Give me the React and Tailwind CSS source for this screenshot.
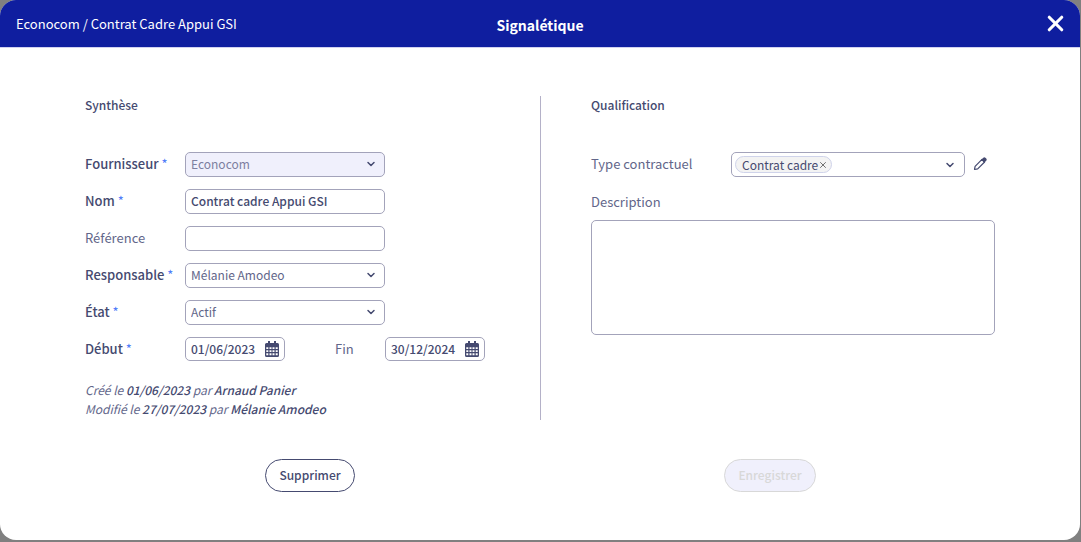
import React, { useState } from "react";
import { ChevronDown, X } from "lucide-react";

const fieldBorder = "border border-[#a3a3ba] rounded-[5px]";

function Label({ htmlFor, required, children }) {
  return (
    <label
      htmlFor={htmlFor}
      className={`w-[100px] shrink-0 pb-px text-[13px] leading-5 ${required ? "font-medium" : "text-[#62668a]"}`}
    >
      {children}
      {required && <span className="text-[#4f7df9] font-normal"> *</span>}
    </label>
  );
}

function SelectField({ id, value, disabled }) {
  return (
    <div className="relative w-[200px]">
      <select
        id={id}
        disabled={disabled}
        defaultValue={value}
        className={`block w-full h-[25px] pl-[5px] pr-7 pb-0.5 appearance-none text-xs opacity-100 ${fieldBorder} ${
          disabled ? "bg-[#f0f0fc] text-[#7d7fa0]" : "bg-white text-[#62668a]"
        }`}
      >
        <option>{value}</option>
      </select>
      <ChevronDown size={12} strokeWidth={3} className="absolute right-2 top-[6px] pointer-events-none" />
    </div>
  );
}

function TextField({ id, value, onChange }) {
  return (
    <input
      id={id}
      type="text"
      value={value}
      onChange={(e) => onChange(e.target.value)}
      className={`w-[200px] h-[25px] px-[5px] pb-0.5 text-xs font-medium ${fieldBorder}`}
    />
  );
}

function CalendarIcon() {
  return (
    <svg width="14" height="16" viewBox="0 0 14 16" fill="currentColor" aria-hidden="true">
      <path
        fillRule="evenodd"
        d="M3 0h2v2h4V0h2v2h1.500a1.500 1.500 0 0 1 1.500 1.500v11a1.500 1.500 0 0 1-1.500 1.500h-11A1.500 1.500 0 0 1 0 14.500v-11A1.500 1.500 0 0 1 1.500 2H3zM1.300 6.200v1.800h2V6.200zM4.500 6.200v1.800h2V6.200zM7.500 6.200v1.800h2V6.200zM10.700 6.200v1.800h2V6.200zM1.300 9.200v1.800h2V9.200zM4.500 9.200v1.800h2V9.200zM7.500 9.200v1.800h2V9.200zM10.700 9.200v1.800h2V9.200zM1.300 12.200v2h2v-2zM4.500 12.200v2h2v-2zM7.500 12.200v2h2v-2zM10.700 12.200v2h2v-2z"
      />
    </svg>
  );
}

function PencilIcon() {
  return (
    <svg width="14" height="14" viewBox="0 0 14 14" aria-hidden="true">
      <path d="M1.500 12.500l.6-3.200L9 2.400l2.600 2.600-6.900 6.900z" fill="none" stroke="currentColor" strokeWidth="1.200" strokeLinejoin="round" />
      <path d="M8.200 2.800L10.300.8a1.500 1.500 0 0 1 2.100 0l.8.8a1.500 1.500 0 0 1 0 2.100l-2 2.100z" fill="currentColor" />
    </svg>
  );
}

function DateField({ id, value, onChange, label }) {
  return (
    <div className={`flex items-center w-[100px] h-6 px-[5px] bg-white ${fieldBorder}`}>
      <input
        id={id}
        type="text"
        value={value}
        onChange={(e) => onChange(e.target.value)}
        className="flex-1 min-w-0 text-xs font-medium outline-none"
      />
      <button type="button" aria-label={label}>
        <CalendarIcon />
      </button>
    </div>
  );
}

export default function App() {
  const [form, setForm] = useState({
    nom: "Contrat cadre Appui GSI",
    reference: "",
    debut: "01/06/2023",
    fin: "30/12/2024",
    description: "",
  });
  const [types, setTypes] = useState(["Contrat cadre"]);

  const update = (field) => (value) => setForm({ ...form, [field]: value });

  return (
    <div className="min-h-screen flex flex-col pr-px pb-0.5 bg-[#808080] text-[#454a70] font-['Noto_Sans_CJK_JP','Open_Sans',sans-serif]">
      <div role="dialog" aria-labelledby="title" className="flex-1 bg-white rounded-2xl overflow-hidden">
        <header className="grid grid-cols-3 items-center h-12 px-4 bg-[#0f1e9f] text-white border-b border-[#d0d1f0]">
          <span className="text-[13px]">Econocom / Contrat Cadre Appui GSI</span>
          <h1 id="title" className="pt-0.5 text-center text-sm font-bold">Signalétique</h1>
          <button type="button" aria-label="Fermer" className="justify-self-end -mr-1">
            <X size={25} strokeWidth={3} />
          </button>
        </header>

        <form onSubmit={(e) => e.preventDefault()}>
          <div className="grid grid-cols-2 px-[85px] pt-12">
            <section className="pb-0.5">
              <h2 className="text-xs leading-[18px] font-medium mb-[38px]">Synthèse</h2>
              <div className="flex flex-col gap-3">
                <div className="flex items-center">
                  <Label htmlFor="fournisseur" required>Fournisseur</Label>
                  <SelectField id="fournisseur" value="Econocom" disabled />
                </div>
                <div className="flex items-center">
                  <Label htmlFor="nom" required>Nom</Label>
                  <TextField id="nom" value={form.nom} onChange={update("nom")} />
                </div>
                <div className="flex items-center">
                  <Label htmlFor="reference">Référence</Label>
                  <TextField id="reference" value={form.reference} onChange={update("reference")} />
                </div>
                <div className="flex items-center">
                  <Label htmlFor="responsable" required>Responsable</Label>
                  <SelectField id="responsable" value="Mélanie Amodeo" />
                </div>
                <div className="flex items-center">
                  <Label htmlFor="etat" required>État</Label>
                  <SelectField id="etat" value="Actif" />
                </div>
                <div className="flex items-center">
                  <Label htmlFor="debut" required>Début</Label>
                  <DateField id="debut" value={form.debut} onChange={update("debut")} label="Choisir la date de début" />
                  <label htmlFor="fin" className="w-[100px] pl-[50px] pb-px text-[13px] leading-5 text-[#62668a]">Fin</label>
                  <DateField id="fin" value={form.fin} onChange={update("fin")} label="Choisir la date de fin" />
                </div>
              </div>
              <div className="mt-[19px] text-xs leading-[19px] italic text-[#62668a]">
                <p>
                  Créé le <b className="font-medium text-[#454a70]">01/06/2023</b> par{" "}
                  <b className="font-medium text-[#454a70]">Arnaud Panier</b>
                </p>
                <p>
                  Modifié le <b className="font-medium text-[#454a70]">27/07/2023</b> par{" "}
                  <b className="font-medium text-[#454a70]">Mélanie Amodeo</b>
                </p>
              </div>
            </section>

            <section className="border-l border-[#b4b1c8] pl-[50px]">
              <h2 className="text-xs leading-[18px] font-medium mb-[38px]">Qualification</h2>
              <div className="flex items-center">
                <span id="type" className="w-[140px] shrink-0 pb-px text-[13px] leading-5 text-[#62668a]">Type contractuel</span>
                <div role="group" aria-labelledby="type" className={`flex flex-1 items-center h-[25px] pl-[3px] pr-2 ${fieldBorder}`}>
                  {types.map((t) => (
                    <span key={t} className="flex items-center h-[17px] pl-1.5 pr-[3px] rounded-full border border-[#cfd3ea] bg-[#f3f3f3] text-xs leading-4">
                      {t}
                      <button type="button" aria-label={`Retirer ${t}`} onClick={() => setTypes(types.filter((x) => x !== t))}>
                        <X size={10} strokeWidth={2} className="text-[#555555]" />
                      </button>
                    </span>
                  ))}
                  <button type="button" aria-label="Ouvrir la liste" className="ml-auto">
                    <ChevronDown size={12} strokeWidth={3} />
                  </button>
                </div>
                <button type="button" aria-label="Modifier les types" className="mx-2 pb-px">
                  <PencilIcon />
                </button>
              </div>
              <label htmlFor="description" className="block mt-[15px] text-[13px] leading-5 text-[#62668a]">Description</label>
              <textarea
                id="description"
                value={form.description}
                onChange={(e) => update("description")(e.target.value)}
                className={`block w-full h-[115px] mt-2 p-1.5 text-xs resize-none ${fieldBorder}`}
              />
            </section>
          </div>

          <div className="grid grid-cols-2 justify-items-center px-20 pt-[39px] pb-12">
            <button type="button" className="h-[33px] px-[13px] pb-px rounded-full border border-[#454a70] text-xs font-medium">
              Supprimer
            </button>
            <button type="submit" disabled className="h-[33px] px-[13px] pb-px rounded-full border border-[#d8d8d8] bg-[#f0f0fc] text-xs font-medium text-[#d8d8d8]">
              Enregistrer
            </button>
          </div>
        </form>
      </div>
    </div>
  );
}
